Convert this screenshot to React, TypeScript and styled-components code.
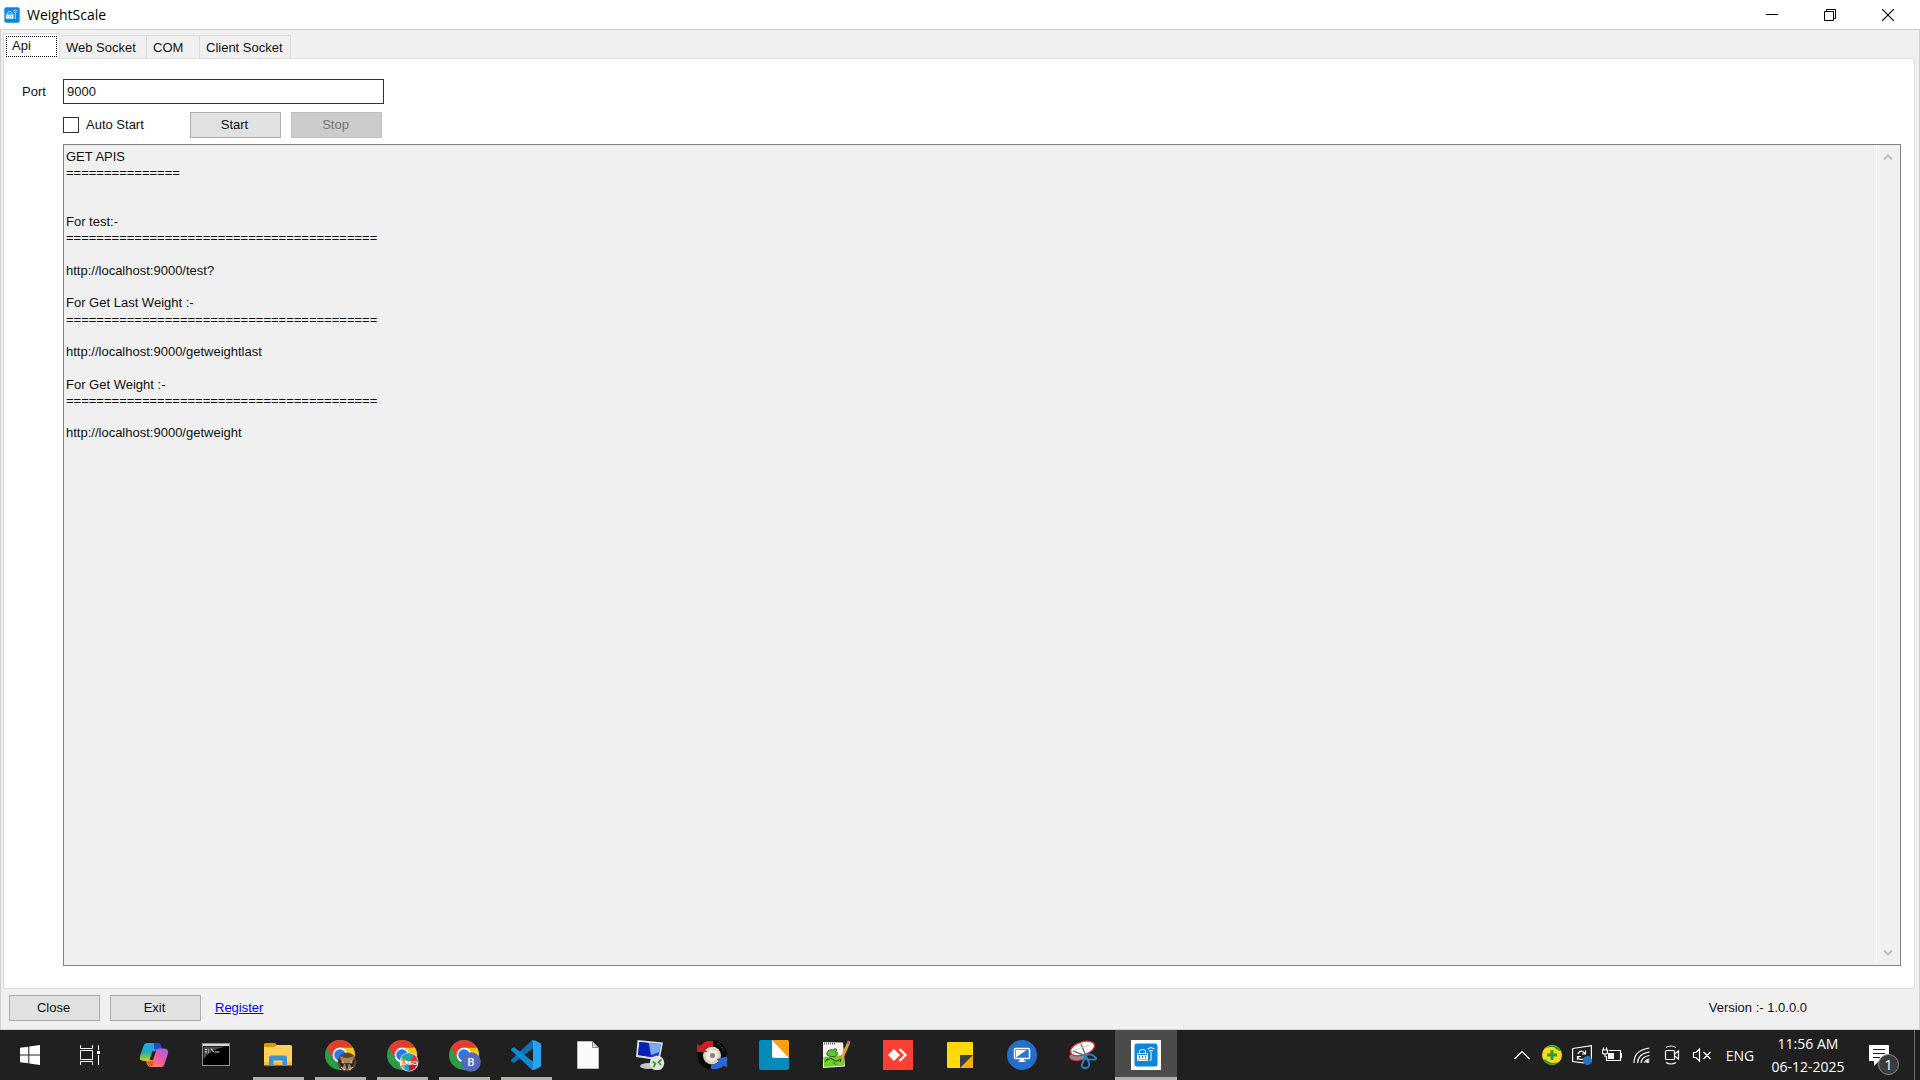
import React from 'react';
import styled, { createGlobalStyle, css } from 'styled-components';

const classic = '"Liberation Sans", Arial, sans-serif';
const modern = '"Open Sans", "Noto Sans", sans-serif';

const GlobalStyle = createGlobalStyle`
  *, *::before, *::after { box-sizing: border-box; }
  body { margin: 0; background: #f0f0f0; }
  button, input, textarea { font: inherit; color: inherit; margin: 0; }
  svg { display: block; flex: none; }
`;

const Desktop = styled.div`
  display: flex;
  flex-direction: column;
  height: 100vh;
  overflow: hidden;
  font: 13px/16px ${classic};
  color: #111;
`;

const AppWindow = styled.main`
  flex: 1;
  min-height: 0;
  display: flex;
  flex-direction: column;
  background: #f0f0f0;
`;

const TitleBar = styled.header`
  display: flex;
  align-items: center;
  height: 29px;
  padding: 0 3px 0 4px;
  background: #fff;
  color: #000;
`;

const Title = styled.h1`
  flex: 1;
  margin: 0 0 0 7px;
  font: 400 14px/20px ${modern};
`;

const WindowButton = styled.button`
  display: grid;
  place-items: center;
  width: 58px;
  height: 28px;
  padding: 0;
  border: 0;
  background: none;
`;

const Client = styled.div`
  flex: 1;
  min-height: 0;
  display: flex;
  flex-direction: column;
  padding: 3px 4px 0 2px;
  border: 1px solid #d0d0d0;
`;

const TabList = styled.div`
  display: flex;
  align-items: flex-end;
  height: 25px;
`;

const Tab = styled.button<{ $active?: boolean; $width: number }>`
  width: ${(p) => p.$width}px;
  height: 23px;
  padding: 1px 0 0 6px;
  text-align: left;
  border: 1px solid #dcdcdc;
  border-width: 1px 1px 0 0;
  background: #f0f0f0;
  white-space: nowrap;
  ${(p) =>
    p.$active &&
    css`
      height: 26px;
      margin-bottom: -1px;
      padding: 2px;
      border-width: 1px 1px 0 1px;
      background: #fff;
      z-index: 1;
    `}
`;

const FocusRing = styled.span`
  display: block;
  height: 21px;
  padding: 1px 0 0 5px;
  border: 1px dotted #000;
`;

const Panel = styled.section`
  flex: 1;
  min-height: 0;
  display: flex;
  flex-direction: column;
  padding: 20px 13px 22px 18px;
  background: #fff;
  border: 1px solid #dcdcdc;
`;

const PortRow = styled.div`
  display: grid;
  grid-template-columns: 41px 321px;
  align-items: center;
`;

const PortInput = styled.input`
  height: 25px;
  padding: 0 0 1px 3px;
  border: 1px solid #333;
  border-radius: 0;
  background: #fff;
  outline: 0;
`;

const ActionRow = styled.div`
  display: flex;
  align-items: center;
  height: 26px;
  margin: 8px 0 6px 41px;
`;

const CheckLabel = styled.label`
  display: flex;
  align-items: center;
  gap: 7px;
  width: 127px;
`;

const CheckBox = styled.input`
  appearance: none;
  width: 16px;
  height: 16px;
  border: 1px solid #333;
  background: #fff;
`;

const PushButton = styled.button`
  width: 91px;
  height: 26px;
  padding: 0 2px 0 0;
  border: 1px solid #adadad;
  background: #e1e1e1;
  &:disabled {
    border-color: #bfbfbf;
    background: #ccc;
    color: #777;
  }
  & + & { margin-left: 10px; }
`;

const LogFrame = styled.div`
  flex: 1;
  min-height: 0;
  display: flex;
  margin-left: 41px;
  border: 1px solid #828282;
  background: #f0f0f0;
`;

const Log = styled.textarea`
  flex: 1;
  padding: 4px 2px;
  border: 0;
  outline: 0;
  resize: none;
  background: none;
  line-height: 1.25;
`;

const ScrollBar = styled.div`
  display: flex;
  flex-direction: column;
  justify-content: space-between;
  width: 24px;
  border-left: 1px solid #fafafa;
`;

const ScrollButton = styled.button`
  display: grid;
  place-items: center;
  height: 24px;
  padding: 0 2px 0 0;
  border: 0;
  background: none;
`;

const Footer = styled.footer`
  display: flex;
  align-items: center;
  height: 40px;
  padding: 0 108px 3px 6px;
`;

const RegisterLink = styled.a`
  margin-left: 14px;
  color: #00f;
`;

const Version = styled.span`
  margin-left: auto;
`;

const TaskBar = styled.nav`
  display: flex;
  justify-content: space-between;
  height: 50px;
  background: #202021;
  color: #fff;
`;

const TaskGroup = styled.div`
  display: flex;
`;

const TaskButton = styled.button<{ $running?: boolean; $active?: boolean; $system?: boolean }>`
  display: grid;
  place-items: center;
  width: ${(p) => (p.$system ? 60 : 62)}px;
  height: 50px;
  padding: 0;
  border: 0;
  background: ${(p) => (p.$active ? '#4b4b4a' : 'none')};
  ${(p) =>
    (p.$running || p.$active) &&
    css`
      background-image: linear-gradient(#b3b0ac, #b3b0ac);
      background-repeat: no-repeat;
      background-position: center bottom;
      background-size: ${p.$active ? '100%' : '51px'} 3px;
    `}
`;

const Pinned = styled.div`
  display: flex;
  margin-left: 3px;
`;

const Tray = styled.div`
  display: flex;
  align-items: center;
  font: 14px/23px ${modern};
`;

const TrayButton = styled.button`
  display: grid;
  place-items: center;
  width: 30px;
  height: 50px;
  padding: 0;
  border: 0;
  background: none;
`;

const Language = styled(TrayButton)`
  width: 46px;
`;

const Clock = styled.time`
  width: 90px;
  margin-right: 8px;
  text-align: center;
  white-space: nowrap;
`;

const ActionCenter = styled(TrayButton)`
  width: 46px;
`;

const ShowDesktop = styled.button`
  width: 6px;
  height: 50px;
  margin-left: 7px;
  padding: 0;
  border: 0;
  border-left: 1px solid #6a6a6a;
  background: none;
`;

const Badge = styled.text`
  font: 14px ${modern};
  text-anchor: middle;
`;

const ScaleLogo = ({ size, framed }: { size: number; framed?: boolean }) => (
  <svg width={size} height={size} viewBox={framed ? '0 0 30 30' : '3 3 24 24'}>
    <rect width="30" height="30" fill={framed ? '#fff' : 'none'} />
    <rect x="3.5" y="3.5" width="23" height="23" rx="2.5" fill="#0b86dc" />
    <g fill="none" stroke="#fff" strokeWidth="1">
      <path d="M6.5 13.500H16.500V20.500H6.500zM8.500 13V11.500Q8.500 9.500 11.500 9.500T14.500 11.500V13M18.500 20.500h1.500V11.500M16.500 9q3.500-3 7 0M18 11q2-1.500 4 0" />
    </g>
    <path d="M6 15h11v4.500H6z" fill="#fff" />
    <path d="M8.500 16v2M11.500 16v2M14.500 16v2" stroke="#0b86dc" />
  </svg>
);

const WindowsIcon = () => (
  <svg width="20" height="20" viewBox="0 0 20 20" fill="#fff">
    <path d="M0 2.800 8.300 1.700V9.400H0zM9.300 1.500 20 0V9.400H9.300zM0 10.400H8.300V18.300L0 17.200zM9.300 10.400H20V20L9.300 18.500z" />
  </svg>
);

const TaskViewIcon = () => (
  <svg width="20" height="20" viewBox="0 0 20 20" fill="none" stroke="#fff">
    <path d="M.5 0V3.500H12.500V0M.5 20V16.500H12.500V20M.5 5.500H12.500V14.500H.5zM18.500 0V5M18.500 10V20" />
    <path d="M17 6h3v3h-3z" fill="#fff" stroke="none" />
  </svg>
);

const CopilotIcon = () => (
  <svg width="30" height="28" viewBox="0 0 30 28">
    <defs>
      <linearGradient id="copA" x1="0" y1="0" x2="0" y2="1">
        <stop stopColor="#19a8f0" />
        <stop offset=".5" stopColor="#22a9c0" />
        <stop offset=".75" stopColor="#6cc257" />
        <stop offset="1" stopColor="#f5c51c" />
      </linearGradient>
      <linearGradient id="copB" x1="1" y1="0" x2="0" y2="1">
        <stop stopColor="#a05af0" />
        <stop offset=".5" stopColor="#ee5c9c" />
        <stop offset="1" stopColor="#ff9a50" />
      </linearGradient>
    </defs>
    <path d="M8 2h10q3 0 4 3l1 4h-5L13 20H9q-6 0-7.500-1Q0 17 2 12L4.500 5Q5.500 2 8 2z" fill="url(#copA)" />
    <path d="M15 2h4q2 0 3 3l1 4h-4q-2 0-2 1L15 7z" fill="#2347d5" />
    <path d="M22 26H12q-3 0-4-3l-1-3h4q2 0 3-3l2-7q1-2.500 4-2.500h5q5 0 4 5l-3 9q-1 4.500-4 4.500z" fill="url(#copB)" />
    <path d="M7.500 20H12q1.500 0 2-1l1 3-2 4q-3 0-4-2.500z" fill="#f05532" />
    <path d="M13.500 10h3.500l-3 9h-3.500z" fill="#202021" />
  </svg>
);

const TerminalIcon = () => (
  <svg width="28" height="24" viewBox="0 0 28 24">
    <rect x=".5" y=".5" width="27" height="22" fill="#000" stroke="#8b929b" />
    <path d="M1 1h26v2H1z" fill="#d5d8df" />
    <path d="M1.500 3.500H24Q8 7 1.500 16z" fill="#4c4c4c" />
    <path d="M3 6.500h2M3 9h2M6.500 6.500v1M6.500 8.500v1M9 5.500l2.500 3.500M12.500 9h5" stroke="#e4e4e4" fill="none" />
  </svg>
);

const FolderIcon = () => (
  <svg width="28" height="24" viewBox="0 0 28 24">
    <path d="M0 1.500Q0 0 1.500 0H11l2.500 3-2 3H0z" fill="#e09a08" />
    <path d="M0 4h10.500L13 2h13.500Q28 2 28 3.500V22H0z" fill="#ffd25a" />
    <path d="M0 19h28v3.500H0z" fill="#f5bd3f" />
    <path d="M5 23V14.500Q5 12.500 7 12.500H21Q23 12.500 23 14.500V23H18.500V17.500H9.500V23z" fill="#3b94d9" />
  </svg>
);

const ChromeIcon = ({ children }: { children: React.ReactNode }) => (
  <svg width="34" height="34" viewBox="-17 -17 34 34">
    <circle r="15" fill="#2b9c48" />
    <path d="M0-7.500H13A15 15 0 0 1 0 15L6.500 3.800z" fill="#fbc31b" />
    <path d="M-13-7.500A15 15 0 0 1 13-7.500H0L-6.500 3.700z" fill="#e63b2e" />
    <circle r="7.400" fill="#fff" />
    <circle r="5.800" fill="#2a7be8" />
    <g transform="translate(7 7)">{children}</g>
  </svg>
);

const OwlAvatar = () => (
  <g>
    <circle r="9.500" fill="#5b4632" />
    <path d="M-7-6Q0-2 7-6L4 8H-4z" fill="#a9835b" />
    <path d="M-9-3-2 1-5 6zM9-3 2 1 5 6z" fill="#28241f" />
    <circle cx="-4" cy="0" r="1.500" fill="#e0a13e" />
    <circle cx="4" cy="0" r="1.500" fill="#e0a13e" />
    <path d="M-2 1h4L0 9z" fill="#26384c" />
    <path d="M-6 5-2 8M6 5 2 8" stroke="#ddd1c0" />
  </g>
);

const TeamAvatar = () => (
  <g>
    <circle r="9.500" fill="#e7e9eb" />
    <path d="M0 0-8-4A9 9 0 0 1 5-7z" fill="#18a9a4" />
    <path d="M0 0 5-7.500A9 9 0 0 1 7 5z" fill="#d8343b" />
    <path d="M-8 1A9 9 0 0 0 0 9V1z" fill="#1b9ed4" />
    <path d="M0 9A9 9 0 0 0 8 2H0z" fill="#b9242f" />
    <path d="M-8-3h4v9h-2z" fill="#f18a24" />
    <text y="3" fontSize="6" fontWeight="700" fontFamily="Liberation Sans" textAnchor="middle" fill="#fff">EASO</text>
  </g>
);

const LetterAvatar = () => (
  <g>
    <circle r="9.800" fill="#5767bd" />
    <text y="4" fontSize="11" fontFamily="Roboto" fontWeight="500" textAnchor="middle" fill="#fff">B</text>
  </g>
);

const CodeIcon = () => (
  <svg width="30" height="30" viewBox="0 0 30 30">
    <path d="M22 0V8.500L3.500 22.500Q2.500 23.200 1.500 22.300L.4 21.300Q-.4 20.400.4 19.600L20.500.8z" fill="#0f6fb5" />
    <path d="M22 30V21.500L3.500 7.500Q2.500 6.800 1.500 7.700L.4 8.700Q-.4 9.600.4 10.400L20.500 29.200z" fill="#1287d2" />
    <path d="M20.500.8Q22-.3 24 .5L30 3.500V26.500L24 29.500Q22 30.300 20.500 29.200L22 28V2z" fill="#28a3ee" />
  </svg>
);

const FileIcon = () => (
  <svg width="22" height="28" viewBox="0 0 22 28">
    <path d="M.5.500H15.500L21.500 6.500V27.500H.5z" fill="#fafafa" stroke="#b9b9b9" />
    <path d="M15.500.500V6.500H21.500z" fill="#d9d9d9" stroke="#8f8f8f" />
  </svg>
);

const RemoteIcon = () => (
  <svg width="30" height="30" viewBox="0 0 30 30">
    <ellipse cx="13" cy="26" rx="8" ry="3" fill="#c7c9c9" />
    <path d="M2.500 0 28 2.500 24.500 20.500 1 17z" fill="#d5dfe2" />
    <path d="M4.500 2 26 4 23 18 3 15z" fill="#1f3fce" />
    <path d="M4.500 2 13 3 16 17 3 15z" fill="#0b1fb0" />
    <path d="M14 3 26 4 24 12 16 15z" fill="#7da9f0" />
    <circle cx="22" cy="23" r="7.300" fill="#e4e5e3" />
    <path d="M17.500 21.500 20.500 23.500 18.500 27M26.500 19.500 23.500 22 26 25" stroke="#3c9a3c" strokeWidth="1.800" fill="none" />
  </svg>
);

const SyncToolIcon = () => (
  <svg width="30" height="30" viewBox="0 0 30 30">
    <circle cx="15" cy="15" r="12" fill="none" stroke="#0a0a0a" strokeWidth="5.500" />
    <circle cx="15" cy="15.500" r="9" fill="#ddd4bd" />
    <circle cx="15" cy="15.500" r="6" fill="#f3eddd" />
    <circle cx="15.500" cy="15.500" r="2.500" fill="#85827c" />
    <path d="M0 3.500 3 6Q8 0 16 1V6.500Q10 6.500 7.500 9L10.500 12H0z" fill="#cf1d20" />
    <path d="M30 16.500V27.500L27.500 25.500Q22 30 14 29V24.500Q19 24.500 22 21.500L19.500 19z" fill="#2a68cf" />
    <path d="M20 3q5 2.500 7 9" stroke="#55585a" strokeDasharray="2 1" fill="none" />
  </svg>
);

const CornerIcon = () => (
  <svg width="30" height="30" viewBox="0 0 30 30">
    <rect width="30" height="30" rx="2" fill="#048bb9" />
    <path d="M13 0H28Q30 0 30 2V18z" fill="#ff9f0e" />
    <path d="M13 0 30 18H15Q13 18 13 16z" fill="#fff" />
  </svg>
);

const NotepadIcon = () => (
  <svg width="30" height="30" viewBox="0 0 30 30">
    <path d="M2 2 22 2.500 24 26.500 2 28z" fill="#f4f5f1" />
    <path d="M2.500 17 22.500 15 23.500 25.500 3 27z" fill="#72cf25" />
    <path d="M3 3.500H15" stroke="#666" strokeDasharray="1 1" strokeWidth="2" />
    <path d="M6 13Q7 9 12 10q3-3 4 0l-2 2q4 0 2 3t-8 1q-3-1-2-3z" fill="#62c533" stroke="#3d5a33" />
    <path d="M6 20q4-3 7 0t7-2M12 22l3 3M7 18l-3 4" stroke="#23371c" fill="none" />
    <path d="M27.500 3 20 20" stroke="#e8a31d" strokeWidth="3" />
    <path d="M28 1 27 4.500" stroke="#c26d75" strokeWidth="3" />
    <path d="M20 18.500 19 22" stroke="#333" />
  </svg>
);

const AnyDeskIcon = () => (
  <svg width="30" height="30" viewBox="0 0 30 30">
    <rect width="30" height="30" fill="#fb4033" />
    <path d="M5 15 11 9 17 15 11 21z" fill="#fff" />
    <path d="M16.500 9 22.500 15 16.500 21" fill="none" stroke="#fff" strokeWidth="2.200" />
  </svg>
);

const StickyIcon = () => (
  <svg width="26" height="26" viewBox="0 0 26 26">
    <rect width="26" height="26" rx="1" fill="#ffd908" />
    <path d="M13 13H26V26H13z" fill="#f6af11" />
    <path d="M13 13H26L13 26z" fill="#3e3e3e" />
  </svg>
);

const SupportIcon = () => (
  <svg width="30" height="30" viewBox="0 0 30 30">
    <circle cx="15" cy="15" r="15" fill="#256fcb" />
    <rect x="7.500" y="8.500" width="15" height="10" rx="1" fill="#2b78d0" stroke="#fff" strokeWidth="1.500" />
    <path d="M9 17.500V10H19.500z" fill="#fff" />
    <path d="M13 19h4v1.500h1.500V22h-7V20.500H13z" fill="#fff" />
  </svg>
);

const SnipIcon = () => (
  <svg width="30" height="30" viewBox="0 0 30 30">
    <ellipse cx="9" cy="16" rx="8.500" ry="4.500" fill="#8e8e8e" stroke="#c93338" transform="rotate(-8 9 16)" />
    <ellipse cx="13.500" cy="8.500" rx="12.500" ry="6.500" fill="#fafafa" stroke="#dc2933" strokeWidth="1.300" transform="rotate(-18 13.500 8.500)" />
    <path d="M12 4 17 16M4 11 17 16" stroke="#777" strokeWidth="1.500" />
    <path d="M6 10 20 5" stroke="#ccc" />
    <path d="M16 16Q20 13 24 15.500T27 19 20 19.500 16 16ZM16 16Q19 18 20 23T16 28 13.500 23 16 16Z" fill="none" stroke="#2289c9" strokeWidth="1.800" />
  </svg>
);

const pinned: { name: string; icon: React.ReactNode; running?: boolean; active?: boolean }[] = [
  { name: 'Copilot', icon: <CopilotIcon /> },
  { name: 'Command Prompt', icon: <TerminalIcon /> },
  { name: 'File Explorer', icon: <FolderIcon />, running: true },
  { name: 'Chrome profile 1', icon: <ChromeIcon><OwlAvatar /></ChromeIcon>, running: true },
  { name: 'Chrome profile 2', icon: <ChromeIcon><TeamAvatar /></ChromeIcon>, running: true },
  { name: 'Chrome profile 3', icon: <ChromeIcon><LetterAvatar /></ChromeIcon>, running: true },
  { name: 'Visual Studio Code', icon: <CodeIcon />, running: true },
  { name: 'Document', icon: <FileIcon /> },
  { name: 'Remote Desktop', icon: <RemoteIcon /> },
  { name: 'Sync tool', icon: <SyncToolIcon /> },
  { name: 'Notes', icon: <CornerIcon /> },
  { name: 'Notepad++', icon: <NotepadIcon /> },
  { name: 'AnyDesk', icon: <AnyDeskIcon /> },
  { name: 'Sticky Notes', icon: <StickyIcon /> },
  { name: 'Remote support', icon: <SupportIcon /> },
  { name: 'Snipping Tool', icon: <SnipIcon /> },
  { name: 'WeightScale', icon: <ScaleLogo size={30} framed />, active: true },
];

const TraySvg = ({ children }: { children: React.ReactNode }) => (
  <svg width="20" height="20" viewBox="0 0 20 20" fill="none" stroke="#fff" strokeWidth="1.200">
    {children}
  </svg>
);

const trayItems: { name: string; icon: React.ReactNode }[] = [
  { name: 'Show hidden icons', icon: <TraySvg><path d="M2.500 14 10 6.500 17.500 14" /></TraySvg> },
  {
    name: 'Antivirus',
    icon: (
      <TraySvg>
        <g stroke="none">
          <circle cx="10" cy="10" r="10" fill="#fbd91d" />
          <path d="M3 3A10 10 0 0 1 19 6Q16 6 13.500 3.500T3 3zM17 17A10 10 0 0 1 1 14Q4 14 6.500 16.500T17 17z" fill="#2c9b33" />
          <path d="M8.500 5h3v3.500H15v3h-3.500V15h-3v-3.500H5v-3h3.500z" fill="#2c9b33" />
        </g>
      </TraySvg>
    ),
  },
  {
    name: 'Updates',
    icon: (
      <TraySvg>
        <path d="M.6 3.500 19.400.7V17M12 17.800.6 16.500V3.500" />
        <path d="M13.500 5.500V9H10M13 8.500Q9 3.500 5.800 9M5.500 15V11.500H9M6 12.500Q7.500 15.500 11 14" />
        <circle cx="15.500" cy="15.500" r="4.500" fill="#2a72c3" stroke="none" />
      </TraySvg>
    ),
  },
  {
    name: 'Battery charging',
    icon: (
      <TraySvg>
        <path d="M7 5.500H18.500V15.500H4.500V11M18.500 8.500H19.800V12.500H18.500M1.500 2.500V5M4.500 2.500V5M.5 5H5.500V7.500Q5.500 9 3 9T.5 7.500zM3 9v3" />
        <path d="M6 8h6v6H6z" fill="#fff" stroke="none" />
      </TraySvg>
    ),
  },
  {
    name: 'Wi-Fi',
    icon: (
      <TraySvg>
        <path d="M2 18Q2 5 17.500 3M5.500 18Q6 8.500 17.500 6.800M9 18Q9.500 11.500 17.500 10.500M12.500 18Q13 14.500 17.500 14" />
        <circle cx="15.700" cy="16.500" r="1.600" fill="#fff" stroke="none" />
      </TraySvg>
    ),
  },
  {
    name: 'Meet now',
    icon: (
      <TraySvg>
        <rect x="3.500" y="5.500" width="9" height="9" rx="1" />
        <path d="M12.500 9 16.500 6V14L12.500 11M4 2.500Q9-.5 14 2.500M4 17.500Q9 20.500 14 17.500" />
      </TraySvg>
    ),
  },
  {
    name: 'Volume muted',
    icon: (
      <TraySvg>
        <path d="M1.500 7.500H4L7.500 4V16L4 12.500H1.500zM11.500 7 18.500 14M18.500 7 11.500 14" />
      </TraySvg>
    ),
  },
];

const rule = '='.repeat(41);
const apiHelp = [
  'GET APIS',
  '='.repeat(15),
  '',
  '',
  'For test:-',
  rule,
  '',
  'http://localhost:9000/test?',
  '',
  'For Get Last Weight :-',
  rule,
  '',
  'http://localhost:9000/getweightlast',
  '',
  'For Get Weight :-',
  rule,
  '',
  'http://localhost:9000/getweight',
].join('\n');

export default function App() {
  return (
    <Desktop>
      <GlobalStyle />
      <AppWindow>
        <TitleBar>
          <ScaleLogo size={16} />
          <Title>WeightScale</Title>
          <WindowButton aria-label="Minimize">
            <svg width="12" height="12" stroke="#000"><path d="M0 5.500H12" /></svg>
          </WindowButton>
          <WindowButton aria-label="Restore">
            <svg width="12" height="12" stroke="#000" fill="none">
              <path d="M.5 2.500H9.500V11.500H.5zM2.500 2.500V.5H11.500V9.500H9.500" />
            </svg>
          </WindowButton>
          <WindowButton aria-label="Close window">
            <svg width="12" height="12" stroke="#000" strokeWidth="1.200"><path d="M0 0 12 12M12 0 0 12" /></svg>
          </WindowButton>
        </TitleBar>
        <Client>
          <TabList role="tablist">
            <Tab role="tab" aria-selected $active $width={57}><FocusRing>Api</FocusRing></Tab>
            <Tab role="tab" $width={87}>Web Socket</Tab>
            <Tab role="tab" $width={53}>COM</Tab>
            <Tab role="tab" $width={91}>Client Socket</Tab>
          </TabList>
          <Panel role="tabpanel">
            <PortRow>
              <label htmlFor="port">Port</label>
              <PortInput id="port" defaultValue="9000" />
            </PortRow>
            <ActionRow>
              <CheckLabel htmlFor="auto-start">
                <CheckBox id="auto-start" type="checkbox" />
                Auto Start
              </CheckLabel>
              <PushButton>Start</PushButton>
              <PushButton disabled>Stop</PushButton>
            </ActionRow>
            <LogFrame>
              <Log aria-label="API help" readOnly value={apiHelp} />
              <ScrollBar>
                <ScrollButton aria-label="Scroll up">
                  <svg width="10" height="8" fill="none" stroke="#bdbdbd" strokeWidth="2"><path d="M1 6.500 5 2.500 9 6.500" /></svg>
                </ScrollButton>
                <ScrollButton aria-label="Scroll down">
                  <svg width="10" height="8" fill="none" stroke="#bdbdbd" strokeWidth="2"><path d="M1 1.500 5 5.500 9 1.500" /></svg>
                </ScrollButton>
              </ScrollBar>
            </LogFrame>
          </Panel>
          <Footer>
            <PushButton>Close</PushButton>
            <PushButton>Exit</PushButton>
            <RegisterLink href="#register">Register</RegisterLink>
            <Version>Version :- 1.0.0.0</Version>
          </Footer>
        </Client>
      </AppWindow>
      <TaskBar>
        <TaskGroup>
          <TaskButton $system aria-label="Start menu"><WindowsIcon /></TaskButton>
          <TaskButton $system aria-label="Task view"><TaskViewIcon /></TaskButton>
          <Pinned>
            {pinned.map((app) => (
              <TaskButton key={app.name} aria-label={app.name} $running={app.running} $active={app.active}>
                {app.icon}
              </TaskButton>
            ))}
          </Pinned>
        </TaskGroup>
        <Tray>
          {trayItems.map((item) => (
            <TrayButton key={item.name} aria-label={item.name}>{item.icon}</TrayButton>
          ))}
          <Language>ENG</Language>
          <Clock>11:56 AM<br />06-12-2025</Clock>
          <ActionCenter aria-label="Notifications">
            <svg width="32" height="40" viewBox="0 -8 32 40">
              <path d="M1 2H21V18H11L6 23V18H1z" fill="#fff" />
              <path d="M5 6.500H17M5 10.500H17M5 14.500H12" stroke="#202021" />
              <circle cx="20.500" cy="21.500" r="10" fill="#3c3c3c" stroke="#8c8c8c" />
              <Badge x="20.500" y="27" fill="#fff">1</Badge>
            </svg>
          </ActionCenter>
          <ShowDesktop aria-label="Show desktop" />
        </Tray>
      </TaskBar>
    </Desktop>
  );
}
